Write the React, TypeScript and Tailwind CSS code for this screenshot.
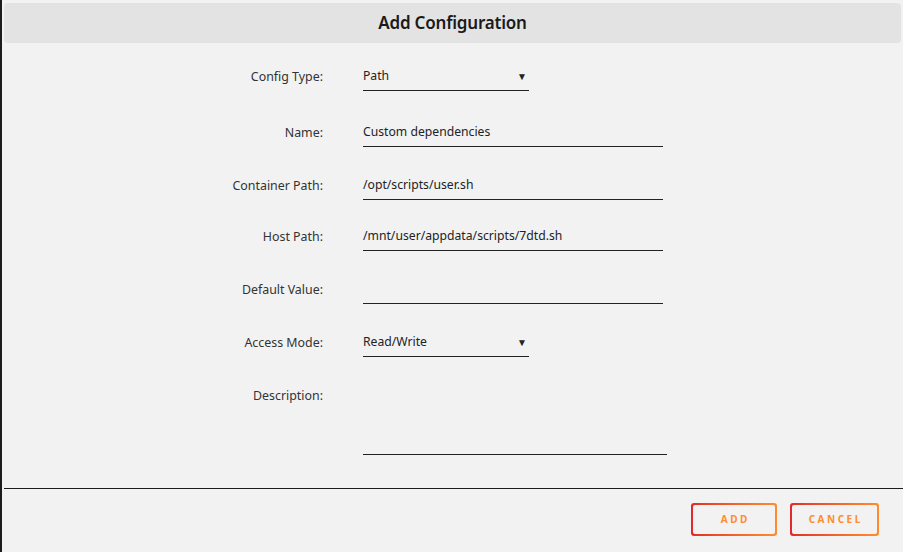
const rows = [
  { label: 'Config Type:', value: 'Path', kind: 'select' },
  { label: 'Name:', value: 'Custom dependencies', kind: 'text' },
  { label: 'Container Path:', value: '/opt/scripts/user.sh', kind: 'text' },
  { label: 'Host Path:', value: '/mnt/user/appdata/scripts/7dtd.sh', kind: 'text' },
  { label: 'Default Value:', value: '', kind: 'text' },
  { label: 'Access Mode:', value: 'Read/Write', kind: 'select' },
];

function GradientButton({ children, width }: { children: React.ReactNode; width: string }) {
  return (
    <div className={`rounded-[3px] bg-gradient-to-r from-[#e22828] to-[#ff8c2f] p-[2px] ${width}`}>
      <div className="flex h-[29px] items-center justify-center rounded-[2px] bg-[#f2f2f2]">
        <span className="pl-[2.5px] text-[10px] font-bold tracking-[2.5px] text-[#ff8c2f]">{children}</span>
      </div>
    </div>
  );
}

export default function App() {
  return (
    <div
      className="flex h-[552px] w-[903px] flex-col overflow-hidden border-l-2 border-[#1c1c1c] bg-[#f2f2f2] text-[#222]"
      style={{ fontFamily: '"Noto Sans", "Open Sans", sans-serif' }}
    >
      {/* Header */}
      <div className="mx-[2px] mt-[3px] flex h-[40px] items-center justify-center rounded-[4px] bg-[#e3e3e3]">
        <h1 className="text-[17px] font-semibold tracking-[-0.2px] text-[#1a1a1a]">Add Configuration</h1>
      </div>

      {/* Form */}
      <div className="flex flex-1 flex-col gap-6 pt-[19px]">
        {rows.map((row, i) => (
          <div key={row.label} className={`flex items-start ${i === 1 ? 'mt-[3px]' : ''} ${i === 3 ? '-mt-[2px]' : ''}`}>
            <div className="w-[321px] text-right text-[12.4px] leading-[29px] text-[#333]">{row.label}</div>
            <div className="ml-[40px]">
              {row.kind === 'select' ? (
                <div className="flex h-[29px] w-[166px] items-center justify-between border-b border-[#222] pr-[2px] text-[12.2px]">
                  <span>{row.value}</span>
                  <span className="text-[10px] leading-none">▼</span>
                </div>
              ) : (
                <div className="flex h-[29px] w-[300px] items-center border-b border-[#222] text-[12.2px]">{row.value}</div>
              )}
            </div>
          </div>
        ))}
        <div className="flex items-start">
          <div className="w-[321px] text-right text-[12.4px] leading-[29px] text-[#333]">Description:</div>
          <div className="ml-[40px] h-[74px] w-[304px] border-b border-[#222]" />
        </div>
      </div>

      {/* Footer */}
      <div className="ml-[2px] border-t border-[#1c1c1c]">
        <div className="flex justify-end gap-[13px] pb-[16px] pr-[24px] pt-[14px]">
          <GradientButton width="w-[86px]">ADD</GradientButton>
          <GradientButton width="w-[89px]">CANCEL</GradientButton>
        </div>
      </div>
    </div>
  );
}
